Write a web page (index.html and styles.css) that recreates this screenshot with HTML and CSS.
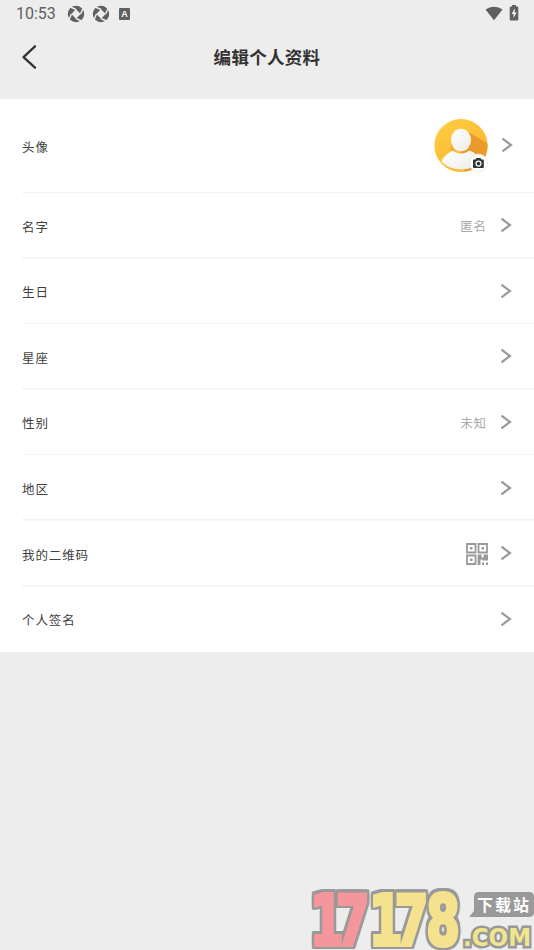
FILE: index.html
```html
<!DOCTYPE html>
<html lang="zh-CN">
<head>
<meta charset="utf-8">
<title>编辑个人资料</title>
<link rel="stylesheet" href="styles.css">
</head>
<body>
<svg class="defs" width="0" height="0" aria-hidden="true">
  <symbol id="chevron" viewBox="0 0 12 16"><path d="M1.500 1.700 10 8 1.500 14.300" fill="none" stroke="#999" stroke-width="2.200"/></symbol>
  <symbol id="shutter" viewBox="0 0 18 18">
    <circle cx="9" cy="9" r="8.200" fill="#606060"/>
    <path d="M9 4.300 13.700 9 9 13.700 4.300 9Z" fill="#ededed"/>
    <path d="M9 4.500 3.500 2M13.500 9 16 3.500M9 13.500 14.500 16M4.500 9 2 14.500" stroke="#ededed" stroke-width="1.500"/>
  </symbol>
</svg>
<header class="statusbar">
  <span class="clock">10:53</span>
  <svg class="shutter" width="18" height="18"><use href="#shutter"/></svg>
  <svg class="shutter second" width="18" height="18"><use href="#shutter"/></svg>
  <span class="input-badge">A</span>
  <span class="spacer"></span>
  <svg class="wifi" width="18" height="15" viewBox="0 0 18 15"><path d="M.5 3.600C5.500-.3 12.500-.3 17.500 3.600L9 14.300Z" fill="#606060"/></svg>
  <svg class="battery" width="10" height="16" viewBox="0 0 10 16"><path d="M3 0h4v1.500h1q1.300 0 1.300 1.300v11.400q0 1.300-1.300 1.300H2q-1.300 0-1.300-1.300V2.800Q.7 1.500 2 1.500h1Z" fill="#606060"/><path d="M5.800 3.600 2.500 9h2v4L7.700 7.500h-1.900Z" fill="#f2f2f2"/></svg>
</header>
<nav class="titlebar">
  <svg class="back" width="16" height="26" viewBox="0 0 16 26"><path d="M14 2.300 2.500 13.200 14 23.700" fill="none" stroke="#333" stroke-width="2.300" stroke-linecap="round" stroke-linejoin="round"/></svg>
  <h1>编辑个人资料</h1>
</nav>
<main class="list">
  <div class="row tall">
    <span class="label">头像</span>
    <svg class="avatar" width="56" height="56" viewBox="0 0 56 56">
      <defs>
        <linearGradient id="gold" x2=".7" y2="1"><stop stop-color="#ffd045"/><stop offset="1" stop-color="#fbb32b"/></linearGradient>
        <linearGradient id="shade" x2="0" y2="1"><stop stop-color="#e99a28"/><stop offset="1" stop-color="#ee9b2b"/></linearGradient>
        <linearGradient id="pale" x2="1" y2="1"><stop stop-color="#fff"/><stop offset="1" stop-color="#eeecea"/></linearGradient>
        <clipPath id="disc"><circle cx="28" cy="27.500" r="26.600"/></clipPath>
      </defs>
      <g clip-path="url(#disc)">
        <path d="M0 0h56v56H0z" fill="url(#gold)"/>
        <path d="M35 14 56 26V56H32L28 34Z" fill="url(#shade)"/>
        <path d="M18 24c0 7 4 11 10 11s10-4 10-11v5c0 5-4 8-10 8s-10-3-10-8Z" fill="#e79a2e"/>
      </g>
      <path d="M8.500 43.500C11 37 16 35 20 32.500c4.500 4 12 4 16 0 6 2 10 6 11.500 11-9 10.500-29.500 10.500-39 0Z" fill="url(#pale)"/>
      <ellipse cx="28" cy="22" rx="10" ry="11.300" fill="url(#pale)"/>
      <circle cx="45.500" cy="45" r="9" fill="#fff" stroke="#dcefcf" stroke-width=".8"/>
      <path d="M41 41.500h1.500l1-1.500h4l1 1.500H50q.8 0 .8.800v7q0 .8-.8.800h-9.200q-.8 0-.8-.8v-7q0-.8 1-.8Z" fill="#303538"/>
      <circle cx="45.500" cy="45.600" r="2.500" fill="#303538" stroke="#fff" stroke-width="1.200"/>
    </svg>
    <svg class="chevron" width="12" height="16"><use href="#chevron"/></svg>
  </div>
  <div class="row"><span class="label">名字</span><span class="value">匿名</span><svg class="chevron" width="12" height="16"><use href="#chevron"/></svg></div>
  <div class="row"><span class="label">生日</span><svg class="chevron" width="12" height="16"><use href="#chevron"/></svg></div>
  <div class="row"><span class="label">星座</span><svg class="chevron" width="12" height="16"><use href="#chevron"/></svg></div>
  <div class="row"><span class="label">性别</span><span class="value">未知</span><svg class="chevron" width="12" height="16"><use href="#chevron"/></svg></div>
  <div class="row"><span class="label">地区</span><svg class="chevron" width="12" height="16"><use href="#chevron"/></svg></div>
  <div class="row">
    <span class="label">我的二维码</span>
    <svg class="qr" width="22" height="22" viewBox="0 0 22 22">
      <path d="M1 1h8.500v8.500H1zM12.500 1H21v8.500h-8.500zM1 12.500h8.500V21H1z" fill="none" stroke="#999" stroke-width="1.800"/>
      <path d="M4 4h2.500v2.500H4zM15.500 4H18v2.500h-2.500zM4 15.500h2.500V18H4zM11.600 11.600h4v3h2v-3H22v6h-5.500v-1h-2V22h-2.900zM16 19.500h2V22h-2zM20 19.500h2V22h-2z" fill="#999"/>
    </svg>
    <svg class="chevron" width="12" height="16"><use href="#chevron"/></svg>
  </div>
  <div class="row"><span class="label">个人签名</span><svg class="chevron" width="12" height="16"><use href="#chevron"/></svg></div>
</main>
<svg class="watermark" width="226" height="62" viewBox="308 888 226 62">
  <g class="digits" transform="scale(.7 1)">
    <text class="pink" x="443 480" y="945">17</text>
    <text class="yellow" x="527 564 609" y="945">178</text>
  </g>
  <path d="M479 892h50q5 0 5 5v15q0 5-5 5h-60l5-6v-14q0-5 5-5Z" fill="#999"/>
  <text class="site" x="477" y="911" textLength="52">下载站</text>
  <text class="domain" x="463" y="946" textLength="68" lengthAdjust="spacingAndGlyphs">.COM</text>
</svg>
</body>
</html>
```
FILE: styles.css
```css
* { box-sizing: border-box; }
body {
  margin: 0;
  height: 950px;
  overflow: hidden;
  position: relative;
  background: #ededed;
  color: #333;
  font-family: "Noto Sans CJK SC", sans-serif;
}
svg { display: block; flex: none; }
.defs { position: absolute; }
.statusbar {
  display: flex;
  align-items: center;
  height: 27px;
  padding: 0 15px 0 16px;
}
.clock {
  width: 51px;
  font: 400 16px/28px Roboto, sans-serif;
  color: #606060;
}
.second { margin-left: 7px; }
.input-badge {
  width: 11px;
  height: 12px;
  margin-left: 9px;
  border-radius: 1px;
  background: #606060;
  color: #fff;
  font: 700 9px/12px "Liberation Sans", sans-serif;
  text-align: center;
}
.spacer { flex: 1; }
.wifi { margin-right: 6px; }
.battery { margin-top: -2px; }
.titlebar {
  display: grid;
  grid-template-columns: 22px 1fr 22px;
  align-items: center;
  height: 71.500px;
  padding: 0 0 11px 21px;
}
h1 {
  margin: 0;
  padding: 0 21px 0 0;
  grid-column: 2;
  font-size: 17.500px;
  line-height: 26px;
  font-weight: 700;
  letter-spacing: .3px;
  text-align: center;
}
.list { background: #fff; height: 553.800px; }
.row {
  display: flex;
  align-items: center;
  height: 65.600px;
  padding: 0 22px;
  background: linear-gradient(#f3f3f3, #f3f3f3) 22px 100% / 100% 1.500px no-repeat;
}
.row.tall { height: 94.500px; padding-right: 21.500px; }
.row:last-child { background: none; }
.label {
  flex: 1;
  padding-top: 1.500px;
  font-size: 12.500px;
  line-height: 20px;
  letter-spacing: .9px;
  color: #404040;
}
.value {
  padding-top: 1px;
  margin-right: 13px;
  font-size: 12.500px;
  line-height: 20px;
  letter-spacing: .9px;
  color: #aaa;
}
.avatar, .qr { margin-right: 12px; }
.chevron { position: relative; top: -.5px; }
.watermark { position: absolute; right: 0; bottom: 0; }
.digits text {
  font: 700 69px "DejaVu Sans", sans-serif;
  stroke-width: 4px;
  filter: drop-shadow(3px 0 0 #999) drop-shadow(-3px 0 0 #999) drop-shadow(0 2.500px 0 #999) drop-shadow(0 -2.500px 0 #999);
}
.pink { fill: #f5959c; stroke: #f5959c; }
.yellow { fill: #f5e28e; stroke: #f5e28e; }
.site { font: 700 16px "Noto Sans CJK SC", sans-serif; fill: #fff; }
.domain {
  font: 700 24px "DejaVu Sans", sans-serif;
  fill: #f0e68b;
  stroke: #999;
  stroke-width: 5px;
  paint-order: stroke;
}
```
